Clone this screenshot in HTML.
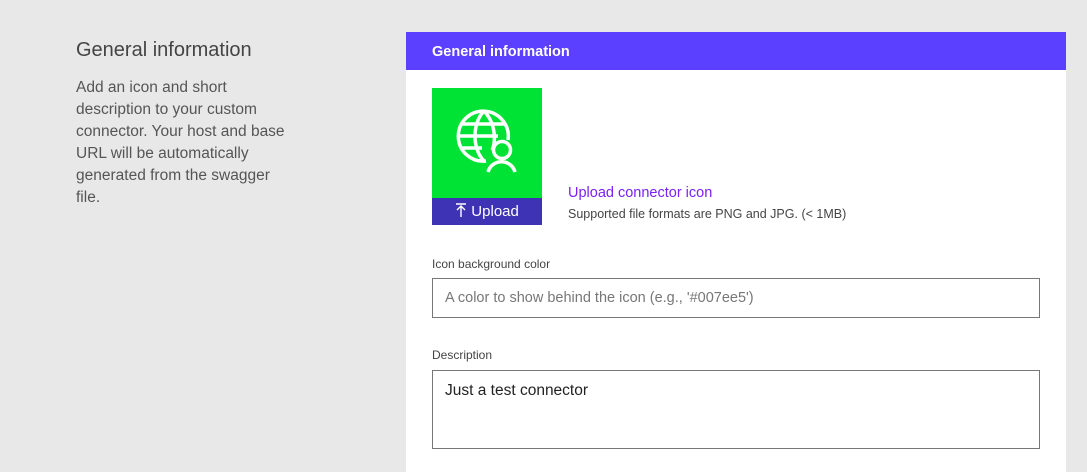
<!DOCTYPE html>
<html><head><meta charset="utf-8"><style>
*{margin:0;padding:0;box-sizing:border-box}
body{width:1087px;height:460px;background:#e8e8e8;font-family:"Liberation Sans",sans-serif;position:relative;overflow:hidden;color:#333}
.t{position:absolute;left:76px;top:39px;font-size:20px;color:#444}
.d{position:absolute;left:76px;top:77px;width:215px;font-size:15.5px;line-height:22px;color:#555}
.p{position:absolute;left:406px;top:32px;width:660px;height:440px;background:#fff}
.h{height:38px;background:#5b40ff;color:#fff;font-weight:bold;font-size:14.5px;padding:12px 0 0 26px}
.ic{position:absolute;left:26px;top:56px;width:110px;height:137px;background:#00e335}
.up{position:absolute;left:0;bottom:0;width:110px;height:27px;background:#3f33b5;color:#fff;font-size:15px;text-align:center;line-height:28px}
.ul{position:absolute;left:162px;top:153px;color:#7b1ff5;font-size:14.5px}
.sf{position:absolute;left:162px;top:175px;color:#444;font-size:12.5px}
.lb{position:absolute;left:26px;font-size:12px;color:#444}
.in{position:absolute;left:26px;width:608px;border:1px solid #777;font-size:14.5px;padding-left:12px}
</style></head><body>
<div class="t">General information</div>
<div class="d">Add an icon and short description to your custom connector. Your host and base URL will be automatically generated from the swagger file.</div>
<div class="p">
<div class="h">General information</div>
<div class="ic">
<svg width="110" height="110" viewBox="0 0 110 110" style="position:absolute;left:0;top:0" fill="none" stroke="#fff" stroke-width="3.5">
<path d="M76 52A25 25 0 1 0 54 73"/>
<path d="M52 23C40 35 40 61 52 73M52 23C64 35 64 55 60 62"/>
<line x1="27" y1="48" x2="66" y2="48"/><line x1="30" y1="36" x2="74" y2="36"/><line x1="30" y1="60" x2="50" y2="60"/>
<circle cx="70" cy="62" r="8.5"/>
<path d="M56 84a14 14 0 0 1 27 0"/>
</svg>
<div class="up"><svg width="12" height="14" viewBox="0 0 12 14" style="vertical-align:-1px" stroke="#fff" stroke-width="1.4" fill="none"><path d="M1 1h10M6 14V3M2 7l4-4 4 4"/></svg> Upload</div>
</div>
<div class="ul">Upload connector icon</div>
<div class="sf">Supported file formats are PNG and JPG. (&lt; 1MB)</div>
<div class="lb" style="top:225px">Icon background color</div>
<div class="in" style="top:246px;height:40px;line-height:38px;color:#777">A color to show behind the icon (e.g., '#007ee5')</div>
<div class="lb" style="top:316px">Description</div>
<div class="in" style="top:338px;height:79px;padding-top:11px;color:#222;font-size:15.5px">Just a test connector</div>
</div>
</body></html>
